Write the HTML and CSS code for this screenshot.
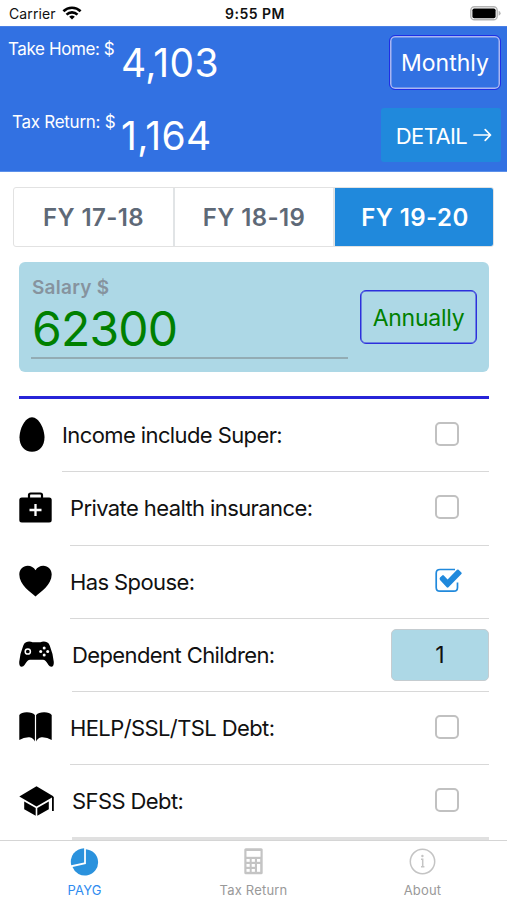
FILE: index.html
```
<!DOCTYPE html>
<html lang="en">
<head>
<meta charset="utf-8">
<title>PAYG Calculator</title>
<link rel="stylesheet" href="styles.css">
</head>
<body>
<div class="app">
  <header class="status">
    <div class="carrier"><span>Carrier</span>
      <svg class="wifi" width="20" height="14" viewBox="0 0 20 14" fill="none" stroke="#000" stroke-width="2.6"><path d="M1.4 5.2a12.4 12.4 0 0 1 17.2 0"/><path d="M4.5 8.6a8 8 0 0 1 11 0"/><path d="M10 13.6 7.2 10.8a4 4 0 0 1 5.6 0z" fill="#000" stroke="none"/></svg>
    </div>
    <div class="clock">9:55 PM</div>
    <svg class="battery" width="31" height="15" viewBox="0 0 31 15"><rect x=".8" y=".8" width="26.4" height="13" rx="3.6" fill="#fff" stroke="#b4b4b4" stroke-width="1.4"/><rect x="2.4" y="2.4" width="23.2" height="9.8" rx="1.8"/><path d="M28.6 4.8q2 .8 2 2.5t-2 2.5z" fill="#b4b4b4"/></svg>
  </header>

  <section class="summary">
    <div class="result">
      <span class="result-label home">Take Home: $</span>
      <span class="amount">4,103</span>
      <button class="period">Monthly</button>
    </div>
    <div class="result">
      <span class="result-label return">Tax Return: $</span>
      <span class="amount">1,164</span>
      <button class="detail"><span>DETAIL</span><svg width="19" height="14" viewBox="0 0 19 14" fill="none" stroke="#fff" stroke-width="1.7" stroke-linecap="round" stroke-linejoin="round"><path d="M1 7h16.5M12.2 1.7 17.5 7l-5.3 5.3"/></svg></button>
    </div>
  </section>

  <nav class="years">
    <button class="year">FY 17-18</button>
    <button class="year">FY 18-19</button>
    <button class="year active">FY 19-20</button>
  </nav>

  <section class="salary">
    <div class="field">
      <div class="field-label">Salary $</div>
      <div class="field-value">62300</div>
    </div>
    <button class="annual">Annually</button>
  </section>

  <main class="options">
    <div class="option">
      <svg class="icon egg" width="26" height="35" viewBox="0 0 26 35"><path d="M13 .3C20 .3 25.500 12 25.500 20.500S20.500 34.700 13 34.700.5 29 .5 20.500 6 .3 13 .3z"/></svg>
      <div class="line"><span class="name">Income include Super:</span><span class="box"></span></div>
    </div>
    <div class="option">
      <svg class="icon" width="33" height="31" viewBox="0 0 33 31"><path d="M10 6V3.200Q10 1.500 11.700 1.500h9.600Q23 1.500 23 3.200V6" fill="none" stroke="#000" stroke-width="2.200"/><rect x=".3" y="5.500" width="32.400" height="25" rx="2.500"/><path d="M16.500 12v12M10.500 18h12" stroke="#fff" stroke-width="2.300"/></svg>
      <div class="line"><span class="name">Private health insurance:</span><span class="box"></span></div>
    </div>
    <div class="option">
      <svg class="icon" width="33" height="32" viewBox="0 0 33 32"><path d="M16.500 31.500C12 27.500.3 20 .3 9.500.3 4.500 4 .7 8.700.7c3.200 0 6.200 1.700 7.800 4.500C18.100 2.400 21.100.7 24.300.7c4.700 0 8.400 3.800 8.400 8.800C32.700 20 21 27.500 16.500 31.500z"/></svg>
      <div class="line"><span class="name">Has Spouse:</span>
        <svg class="check" width="28" height="25" viewBox="0 0 28 25" fill="none" stroke="#2089dc"><path d="M20 1.500H5Q1.200 1.500 1.200 5.200V19.500Q1.200 23.200 5 23.200H18.800Q22.500 23.200 22.500 19.500V14.500" stroke-width="1.700"/><path d="M5 9.500 7.200 7.400q.8-.7 1.600 0L12.600 11.400 22 1.800q.8-.7 1.600 0L26.400 4.400q.8.8 0 1.600L13.500 19.200q-.9.9-1.800 0L5 11.900q-.9-1.200 0-2.400z" fill="#2089dc" stroke="none"/></svg>
      </div>
    </div>
    <div class="option">
      <svg class="icon" width="35" height="26" viewBox="0 0 35 26"><path d="M7 1.300Q9.500 0 12 .7q1.500.5 3 .5h5q1.500 0 3-.5 2.500-.7 5 .6 2 1 2.800 3.400Q34 12.500 34.800 21q.2 4.700-2.500 4.700-1.700 0-2.800-1.700Q26.500 18.700 24 18.700H11Q8.500 18.700 5.500 24q-1.100 1.700-2.800 1.700Q0 25.700.2 21 1 12.500 4.200 4.700 5 2.300 7 1.300z"/><circle cx="8.800" cy="10.500" r="2.600" fill="none" stroke="#fff" stroke-width="1.500"/><g fill="#fff"><circle cx="25.200" cy="7" r="1.500"/><circle cx="25.200" cy="14" r="1.500"/><circle cx="21.700" cy="10.500" r="1.500"/><circle cx="28.700" cy="10.500" r="1.500"/></g></svg>
      <div class="line"><span class="name">Dependent Children:</span><span class="count">1</span></div>
    </div>
    <div class="option">
      <svg class="icon" width="33" height="30" viewBox="0 0 33 30"><path d="M15.900 3V29.500Q14.500 26 10.500 25.300 5 25 .3 28V3Q2.500.2 8 .3q5.500 0 7.900 2.700zM17.100 3V29.500Q18.500 26 22.500 25.300q5.500-.3 10.200 2.700V3Q30.500.2 25 .3q-5.500 0-7.900 2.700z"/></svg>
      <div class="line"><span class="name">HELP/SSL/TSL Debt:</span><span class="box"></span></div>
    </div>
    <div class="option">
      <svg class="icon" width="35" height="30" viewBox="0 0 35 30"><path d="M17.500.3 34.700 10.500 17.500 20.500.3 10.500zM5.200 15.400 16.700 22.100V29.700L5.200 23.200zM18.300 22.100 29.800 15.400V23.200L18.300 29.700zM33 11h1.800v14H33z"/></svg>
      <div class="line last"><span class="name">SFSS Debt:</span><span class="box"></span></div>
    </div>
  </main>

  <footer class="tabs">
    <div class="tab selected">
      <svg width="29" height="28" viewBox="0 0 29 28" fill="#2b92dd"><path d="M14.100.2V14.500L1.300 17.300A13.500 13.500 0 0 1 14.100.2z"/><path d="M15.900 1.200A13.200 13.200 0 1 1 2.500 18.900L15.900 16z"/></svg>
      <span>PAYG</span>
    </div>
    <div class="tab">
      <svg width="19" height="27" viewBox="0 0 19 27"><rect x=".3" y=".3" width="18.400" height="26" rx="1.500" fill="#c4c4c4"/><g fill="#fff"><rect x="2.500" y="3" width="14" height="5.800"/><rect x="2.500" y="11" width="3.200" height="2.800"/><rect x="7.700" y="11" width="3.200" height="2.800"/><rect x="13" y="11" width="3.200" height="2.800"/><rect x="2.500" y="16" width="3.200" height="2.800"/><rect x="7.700" y="16" width="3.200" height="2.800"/><rect x="2.500" y="21" width="3.200" height="2.800"/><rect x="7.700" y="21" width="3.200" height="2.800"/><rect x="13" y="16" width="3.200" height="7.800"/></g></svg>
      <span>Tax Return</span>
    </div>
    <div class="tab">
      <svg width="27" height="27" viewBox="0 0 27 27" fill="none" stroke="#c4c4c4" stroke-width="1.500"><circle cx="13.500" cy="13.500" r="12.200"/><path d="M12 11.300h1.700v7.200M12 18.700h3.400"/><circle cx="13.400" cy="8" r="1.200" fill="#c4c4c4" stroke="none"/></svg>
      <span>About</span>
    </div>
  </footer>
</div>
</body>
</html>
```
FILE: styles.css
```
* { box-sizing: border-box; }
body { margin: 0; background: #fff; color: #111; font-family: Inter, "Liberation Sans", sans-serif; }
button { margin: 0; padding: 0; font: inherit; color: inherit; background: none; border: 0; white-space: nowrap; }
svg { display: block; flex: none; }
.app { width: 507px; height: 900px; display: flex; flex-direction: column; overflow: hidden; }

.status { flex: none; height: 26px; display: grid; grid-template-columns: 1fr auto 1fr; align-items: center; padding: 1px 6px 0 9px; font-size: 14px; }
.carrier { display: flex; align-items: center; gap: 6px; letter-spacing: .1px; }
.wifi { margin-top: -2px; }
.clock { font-weight: 600; letter-spacing: .5px; }
.battery { justify-self: end; }

.summary { flex: none; height: 146px; background: #3271e2; color: #fff; display: grid; grid-template-rows: 73px 73px; border-bottom: 1px solid #5b90ea; border-top: 1px solid #4a80e5; }
.result { display: grid; grid-template-columns: 121px 1fr auto; align-items: start; padding-right: 6px; }
.result-label { font-size: 17px; line-height: 20px; margin-top: 12px; white-space: nowrap; }
.home { padding-left: 8px; letter-spacing: -.4px; }
.return { padding-left: 12px; letter-spacing: -.27px; }
.amount { font-size: 39px; line-height: 46px; margin-top: 13px; letter-spacing: .3px; }
.period { width: 112px; height: 55px; margin-top: 8px; border: 1.500px solid #1d2fe6; border-radius: 6px; box-shadow: inset 0 0 0 1.500px #a9b5f2; font-size: 23px; }
.detail { width: 120px; height: 54px; margin-top: 8px; padding-left: 6px; background: #2089dc; border-radius: 3px; font-size: 22px; letter-spacing: -.6px; display: flex; align-items: center; justify-content: center; gap: 6px; }
.detail span { margin-top: 2px; }

.years { flex: none; height: 60px; margin: 15px 13px 0; display: grid; grid-template-columns: 161px 160px 160px; border: 1px solid #e2e2e2; border-radius: 3px; overflow: hidden; }
.year { font-size: 24px; font-weight: 600; letter-spacing: .4px; color: #5e6977; border-right: 2px solid #e1e4e6; }
.year.active { color: #fff; background: #2089dc; border: 0; }

.salary { flex: none; height: 110px; margin: 15px 18px 0 19px; padding: 0 12px; border-radius: 6px; background: #add8e6; display: flex; justify-content: space-between; }
.field { width: 317px; height: 97px; border-bottom: 2px solid #93acb4; }
.field-label { margin: 14px 0 0 1px; font-size: 19px; line-height: 24px; font-weight: 600; letter-spacing: .25px; color: #86939e; }
.field-value { margin-left: 1px; font-size: 48px; line-height: 57px; letter-spacing: -.8px; color: #008000; }
.annual { width: 117px; height: 54px; margin-top: 28px; padding-top: 2px; border: 1px solid #2d30dc; box-shadow: inset 0 0 0 .5px #2d30dc; border-radius: 6px; font-size: 23px; letter-spacing: -.25px; color: #008000; }

.options { flex: none; margin: 24px 18px 0 19px; border-top: 3px solid #2724d8; display: grid; grid-template-rows: repeat(5, 73.300px) 74.500px; }
.option { display: flex; align-items: center; }
.icon { margin: -3px 18px 0 0; }
.egg { margin-right: 17px; }
.line { flex: 1; height: 100%; display: flex; align-items: center; justify-content: space-between; border-bottom: 1.500px solid #d8d8d8; }
.line.last { border-bottom: 3px solid #e0e0e0; }
.name { font-size: 22px; letter-spacing: -.6px; white-space: nowrap; }
.box { width: 24px; height: 24px; margin: -3px 30px 0 0; border: 2px solid #c1c1c1; border-radius: 5px; }
.check { margin: -3px 26px 0 0; }
.count { width: 98px; height: 52px; background: #add8e6; border: 1px solid #c5ccd0; border-radius: 5px; display: grid; place-items: center; font-size: 23px; }

.tabs { flex: none; height: 60px; margin-top: auto; background: #fff; border-top: 1px solid #d5d5d5; display: grid; grid-template-columns: repeat(3, 1fr); }
.tab { display: flex; flex-direction: column; align-items: center; justify-content: space-between; padding: 7px 0 1px; font-size: 13px; line-height: 16px; letter-spacing: .2px; color: #999; }
.tab span { height: 17px; margin-top: auto; }
.selected { color: #2f8cf0; }
```
